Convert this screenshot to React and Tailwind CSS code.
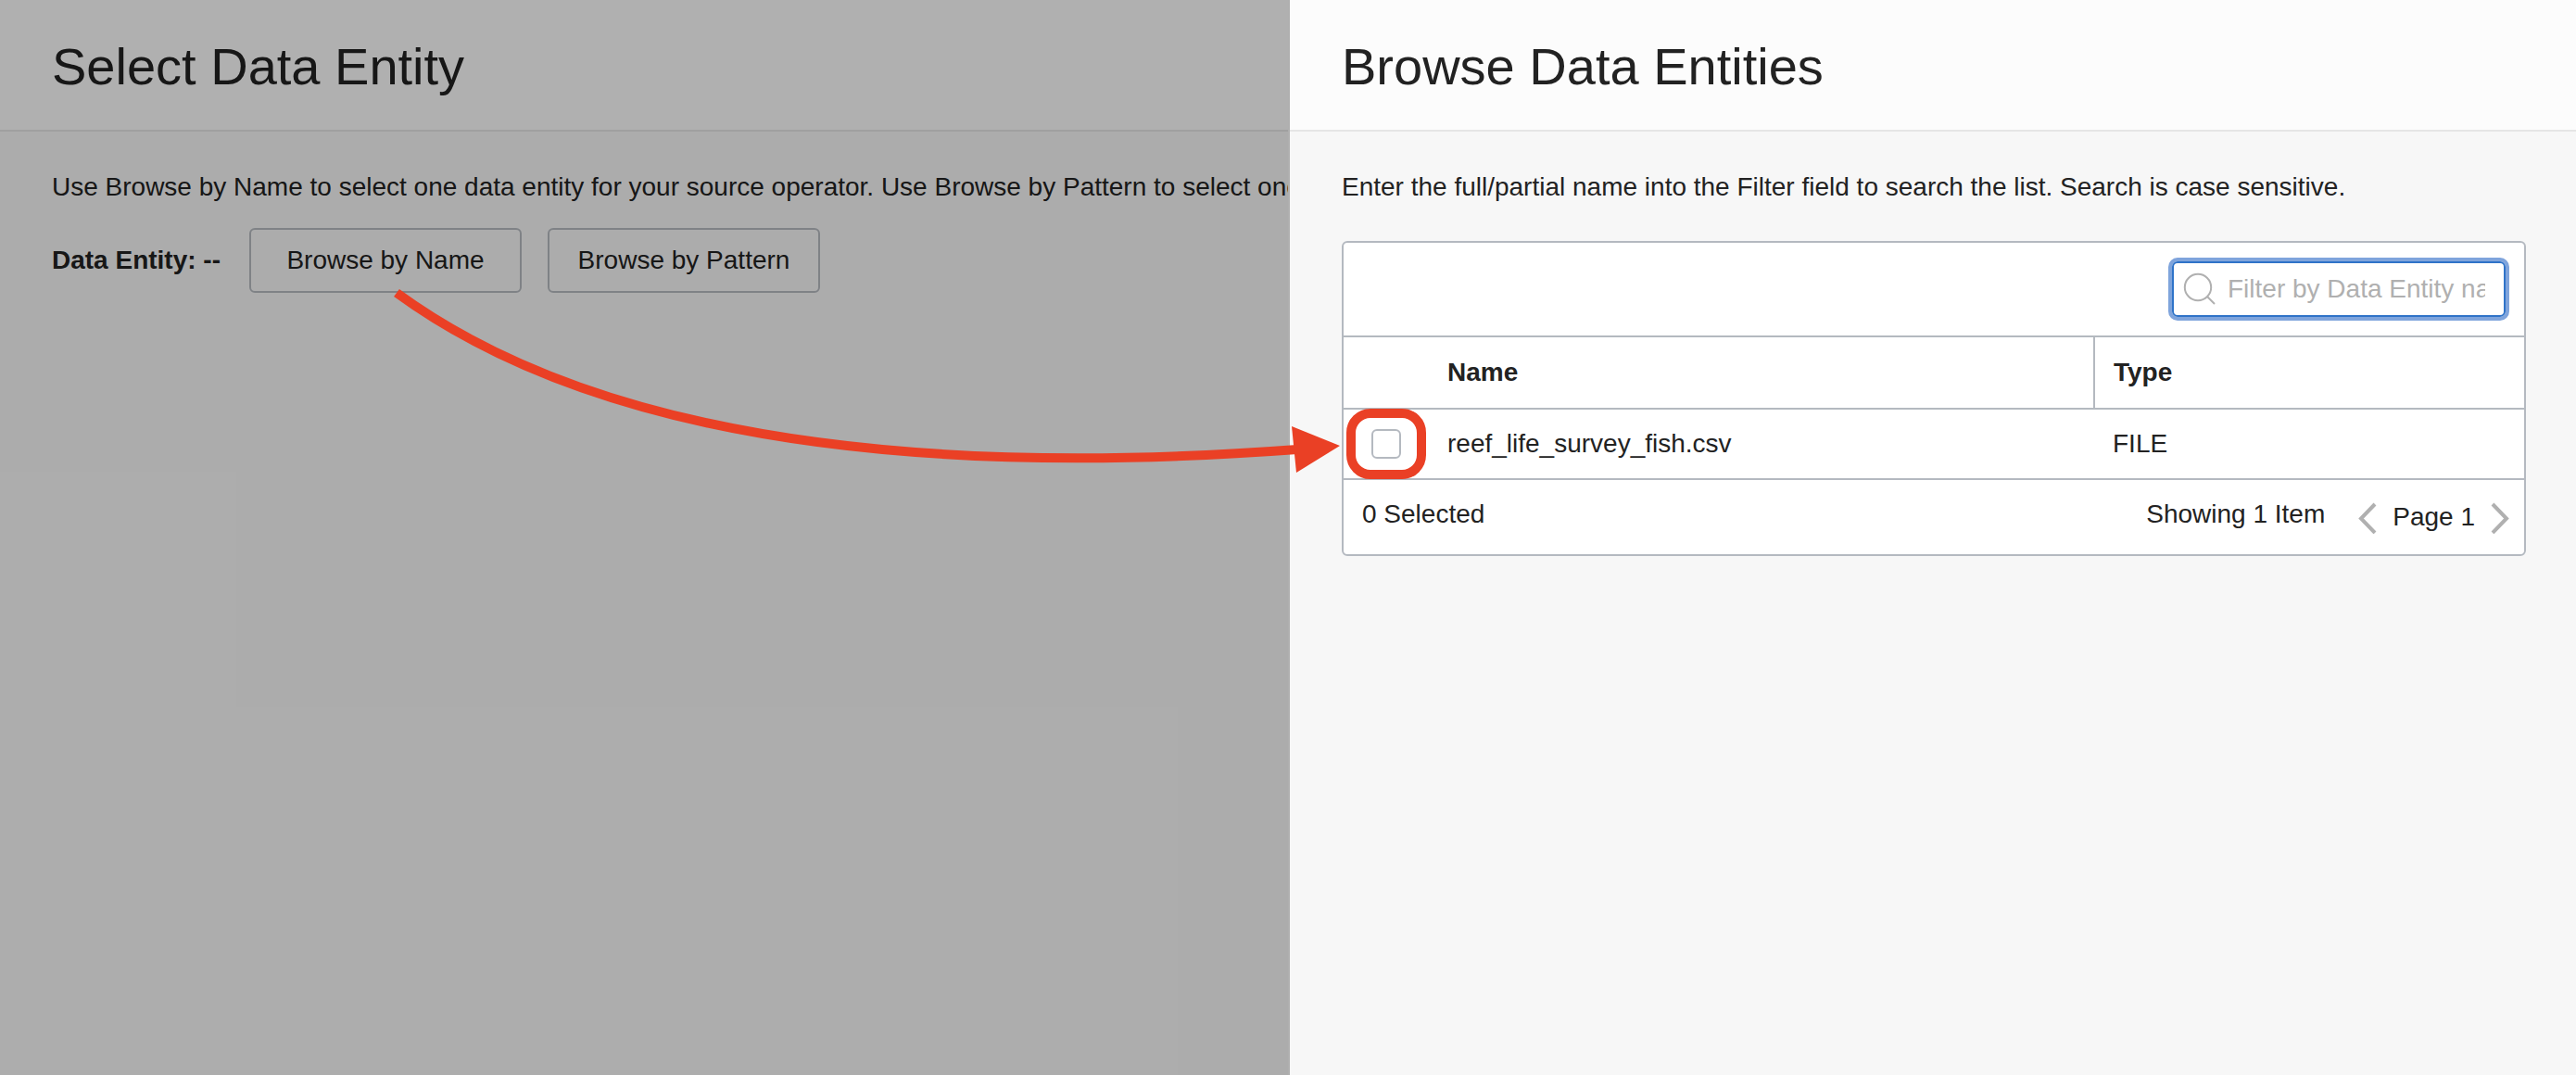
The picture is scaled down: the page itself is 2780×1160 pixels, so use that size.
import React from "react";

const FILES = [{ name: "reef_life_survey_fish.csv", type: "FILE" }];

function PanelHeader({ title }) {
  return (
    <header className="flex h-[142px] items-center border-b-2 border-[#e5e5e5] bg-[#fcfcfc] px-14 pt-1">
      <h1 className="text-[56px] leading-[64px]">{title}</h1>
    </header>
  );
}

function OutlineButton({ children }) {
  return (
    <button
      type="button"
      className="h-[70px] w-[294px] shrink-0 rounded-md border-2 border-[#b6bbc1] whitespace-nowrap"
    >
      {children}
    </button>
  );
}

function SelectPanel() {
  return (
    <section className="relative min-w-0 overflow-hidden bg-[#f7f7f7]">
      <PanelHeader title="Select Data Entity" />
      <div className="px-14 pt-10">
        <p className="whitespace-nowrap leading-10">
          Use Browse by Name to select one data entity for your source operator. Use Browse by Pattern to select one
        </p>
        <div className="mt-6 flex items-center gap-7">
          <span className="min-w-[185px] whitespace-nowrap font-bold">Data Entity: --</span>
          <OutlineButton>Browse by Name</OutlineButton>
          <OutlineButton>Browse by Pattern</OutlineButton>
        </div>
      </div>
      <div className="absolute inset-0 bg-black/30" />
    </section>
  );
}

function FilterBox() {
  return (
    <div className="relative w-[360px]">
      <svg
        className="pointer-events-none absolute left-[11px] top-[11px] h-9 w-9"
        viewBox="0 0 36 36"
        fill="none"
        stroke="#b0b0b0"
        strokeWidth="2"
        aria-hidden="true"
      >
        <circle cx="17" cy="17" r="14.2" />
        <path d="M27 27l8 8" />
      </svg>
      <input
        type="text"
        aria-label="Filter by Data Entity name"
        placeholder="Filter by Data Entity name"
        className="block h-[60px] w-full rounded-md border-2 border-[#2f73c8] bg-transparent pl-[58px] pr-5 outline-none ring-4 ring-[#7fa4dc] placeholder:text-[#b0b0b0]"
      />
    </div>
  );
}

function Chevron({ label, d }) {
  return (
    <button type="button" aria-label={label} className="h-9 w-5">
      <svg className="h-9 w-5" viewBox="0 0 20 36" fill="none" stroke="#b0b0b0" strokeWidth="4" aria-hidden="true">
        <path d={d} />
      </svg>
    </button>
  );
}

function EntityTable() {
  return (
    <div className="rounded-md border-2 border-[#b4b9c0] bg-white">
      <div className="flex h-[100px] items-center justify-end px-5">
        <FilterBox />
      </div>
      <table className="w-full table-fixed border-collapse text-left">
        <thead>
          <tr className="h-[78px] border-y-2 border-[#b4b9c0]">
            <th className="w-[92px]" aria-label="Select" />
            <th className="border-r-2 border-[#b4b9c0] px-5">Name</th>
            <th className="w-[464px] px-5">Type</th>
          </tr>
        </thead>
        <tbody>
          {FILES.map((file) => (
            <tr key={file.name} className="h-[76px] border-b-2 border-[#b4b9c0]">
              <td>
                <div className="relative flex h-[74px] items-center pl-[30px]">
                  <input
                    type="checkbox"
                    aria-label={file.name}
                    className="h-8 w-8 appearance-none rounded-md border-2 border-[#b4b9c0] bg-white"
                  />
                  <div className="pointer-events-none absolute -inset-y-px left-[3px] w-[86px] rounded-[26px] border-10 border-[#ea4025]" />
                </div>
              </td>
              <td className="px-5">{file.name}</td>
              <td className="px-5">{file.type}</td>
            </tr>
          ))}
        </tbody>
      </table>
      <div className="flex h-20 items-start pl-5 pr-4 pt-[17px] leading-10">
        <span>0 Selected</span>
        <span className="ml-auto">Showing 1 Item</span>
        <div className="ml-9 flex items-center gap-[17px] pt-[3px]">
          <Chevron label="Previous page" d="M18 4L3 19.500L18 35" />
          <span>Page 1</span>
          <Chevron label="Next page" d="M2 4L17 19.500L2 35" />
        </div>
      </div>
    </div>
  );
}

function BrowsePanel() {
  return (
    <section className="min-w-0 border-l-2 border-[#afafaf] bg-[#f7f7f7]">
      <PanelHeader title="Browse Data Entities" />
      <div className="pl-14 pr-[54px] pt-10">
        <p className="mb-[38px] leading-10">
          Enter the full/partial name into the Filter field to search the list. Search is case sensitive.
        </p>
        <EntityTable />
      </div>
    </section>
  );
}

function CalloutArrow() {
  return (
    <svg
      className="pointer-events-none absolute left-0 top-0 h-[560px] w-[1450px]"
      viewBox="0 0 1450 560"
      fill="none"
      aria-hidden="true"
    >
      <path d="M428 316Q728 535 1400 485" stroke="#ea4025" strokeWidth="10" />
      <path d="M1394 460L1446 481L1399 510Z" fill="#ea4025" />
    </svg>
  );
}

export default function App() {
  return (
    <main className="relative grid min-h-screen grid-cols-2 font-['Liberation_Sans',Arial,sans-serif] text-[28px] text-[#222222]">
      <SelectPanel />
      <BrowsePanel />
      <CalloutArrow />
    </main>
  );
}
